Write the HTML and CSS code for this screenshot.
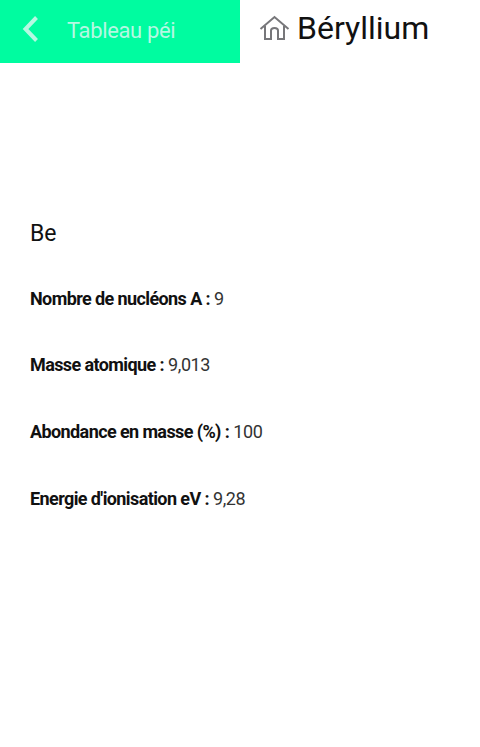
FILE: index.html
```html
<!DOCTYPE html>
<html lang="fr">
<head>
<meta charset="utf-8">
<title>Béryllium</title>
<link rel="stylesheet" href="styles.css">
</head>
<body>
<header class="top">
  <a class="back">
    <svg class="chev" width="20" height="28" viewBox="0 0 20 28"><path d="M16.5 2.5 L5.5 14 L16.5 25.5" fill="none" stroke="#b5f8e2" stroke-width="4"/></svg>
    <span class="back-label">Tableau péi</span>
  </a>
  <div class="title">
    <svg class="home" width="32" height="26" viewBox="0 0 32 26"><path d="M1.5 14 L15.5 2 L29.5 14 M6 11 V24 H12 V15.5 Q12 13 15.5 13 Q19 13 19 15.5 V24 H25 V11" fill="none" stroke="#77777a" stroke-width="2"/></svg>
    <h1>Béryllium</h1>
  </div>
</header>
<main class="content">
  <p class="symbol">Be</p>
  <p class="row"><b>Nombre de nucléons A :</b> 9</p>
  <p class="row"><b>Masse atomique :</b> 9,013</p>
  <p class="row"><b>Abondance en masse (%) :</b> 100</p>
  <p class="row"><b>Energie d'ionisation eV :</b> 9,28</p>
</main>
</body>
</html>
```
FILE: styles.css
```css
* { box-sizing: border-box; }
html, body { margin: 0; padding: 0; }
body { width: 480px; height: 747px; background: #fff; color: #111; font-family: Roboto, sans-serif; overflow: hidden; }
.top { display: flex; height: 63px; }
.back { width: 240px; background: #00fca0; display: flex; align-items: flex-start; padding: 15px 0 0 20px; }
.back-label { margin-left: 27px; margin-top: 2px; color: #b5f8e2; font-size: 22px; line-height: 28px; letter-spacing: -0.35px; }
.title { display: flex; align-items: flex-start; padding: 10px 0 0 19px; gap: 6px; }
.home { margin-top: 5px; }
h1 { margin: 0; font-size: 32px; line-height: 36px; font-weight: 400; color: #111; }
.content { display: flex; flex-direction: column; gap: 33.67px; padding: 155px 30px 0; }
.symbol { margin: 0 0 -2px; font-size: 23px; line-height: 32px; }
.row { margin: 0; font-size: 18px; line-height: 33px; letter-spacing: -0.4px; color: #333; font-weight: 400; }
.row b { font-weight: 700; color: #111; letter-spacing: -0.6px; }
```
